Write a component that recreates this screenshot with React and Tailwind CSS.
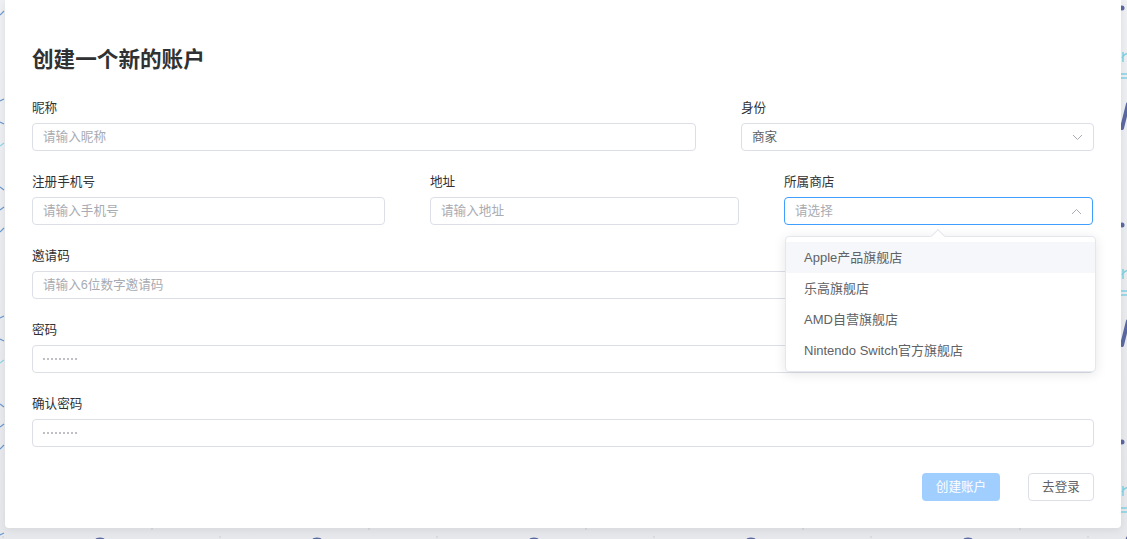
import { useState } from 'react'

const FONT = "font-['Liberation_Sans','Noto_Sans_CJK_SC',sans-serif]"

const STORES = ['Apple产品旗舰店', '乐高旗舰店', 'AMD自营旗舰店', 'Nintendo Switch官方旗舰店']

function Chevron({ up }) {
  return (
    <svg width="11" height="7" viewBox="0 0 11 7" className="text-[#a8abb2]">
      <polyline
        points={up ? '1,6 5.5,1.5 10,6' : '1,1 5.5,5.5 10,1'}
        fill="none"
        stroke="currentColor"
        strokeWidth="1"
      />
    </svg>
  )
}

function Field({ label, children, className = '' }) {
  return (
    <div className={`flex flex-col ${className}`}>
      <label className="mb-[4px] h-[22px] text-[12.6px] leading-[22px] text-[#303133]">{label}</label>
      {children}
    </div>
  )
}

function Box({ children, focused = false }) {
  return (
    <div
      className={`flex h-[28px] items-center rounded-[4px] border px-[10px] text-[12.6px] ${
        focused ? 'border-[#409eff]' : 'border-[#dcdfe6]'
      }`}
    >
      {children}
    </div>
  )
}

function Placeholder({ children }) {
  return <span className="text-[#a8abb2]">{children}</span>
}

function Dots() {
  return (
    <span className="flex gap-[2px]">
      {Array.from({ length: 9 }).map((_, i) => (
        <span key={i} className="h-[2px] w-[2px] rounded-full bg-[#a8abb2]" />
      ))}
    </span>
  )
}

// decorative tiled backdrop; only thin slivers show around the card
function Background() {
  return (
    <svg className="absolute inset-0 h-full w-full" aria-hidden="true">
      <defs>
        <pattern id="right" x="1120" y="0" width="20" height="217" patternUnits="userSpaceOnUse">
          <circle cx="2" cy="8" r="2.5" fill="#5b69a3" />
          <path d="M2 58 q3 -5 6 -4 M3 52 v10" fill="none" stroke="#7fd3e6" strokeWidth="1.5" />
          <path d="M1 74 h8 M1 78 h8" fill="none" stroke="#7fd3e6" strokeWidth="1.5" />
          <path d="M2 128 l6 -24" fill="none" stroke="#5b69a3" strokeWidth="4" strokeLinecap="round" />
        </pattern>
        <pattern id="left" x="0" y="0" width="10" height="217" patternUnits="userSpaceOnUse">
          <path d="M0 15 l4 -4 M0 101 l4 -2 M0 122 l4 2 M0 187 l4 3 M0 210 l4 -3" fill="none" stroke="#6a9ad0" strokeWidth="1.2" />
          <path d="M0 146 l4 -3" fill="none" stroke="#8fd6ea" strokeWidth="1.2" />
        </pattern>
        <pattern id="bottom" x="0" y="527" width="217" height="20" patternUnits="userSpaceOnUse">
          <circle cx="100" cy="19" r="7" fill="none" stroke="#5b69a3" strokeWidth="3" />
          <circle cx="152" cy="2" r="0.8" fill="#c3c7d2" />
          <circle cx="3" cy="10" r="0.8" fill="#c3c7d2" />
          <circle cx="219" cy="10" r="0.8" fill="#c3c7d2" />
        </pattern>
        <linearGradient id="fade" x1="0" y1="0" x2="0" y2="1">
          <stop offset="0" stopColor="#eef0f3" />
          <stop offset="1" stopColor="#e6e8ec" />
        </linearGradient>
      </defs>
      <rect width="100%" height="100%" fill="url(#fade)" />
      <rect x="1120" y="0" width="7" height="539" fill="url(#right)" />
      <rect x="0" y="0" width="5" height="539" fill="url(#left)" />
      <rect x="0" y="527" width="1127" height="12" fill="url(#bottom)" />
    </svg>
  )
}

export default function App() {
  const [hover] = useState(0)

  return (
    <div className={`relative h-[539px] w-full overflow-hidden ${FONT}`}>
      <Background />
      <div className="relative ml-[5px] w-[1116px] rounded-b-[4px] bg-white px-[27px] pt-[45px] pb-[27px] shadow-[0_2px_8px_rgba(0,0,0,0.08)]">
        <h1 className="h-[30px] text-[21.6px] leading-[30px] font-bold text-[#303133]">创建一个新的账户</h1>

        <div className="mt-[22px] flex gap-[45px]">
          <Field label="昵称" className="flex-1">
            <Box>
              <Placeholder>请输入昵称</Placeholder>
            </Box>
          </Field>
          <Field label="身份" className="w-[353px]">
            <Box>
              <span className="flex-1 text-[#606266]">商家</span>
              <Chevron />
            </Box>
          </Field>
        </div>

        <div className="mt-[20px] flex gap-[45px]">
          <Field label="注册手机号" className="w-[353px]">
            <Box>
              <Placeholder>请输入手机号</Placeholder>
            </Box>
          </Field>
          <Field label="地址" className="w-[309px]">
            <Box>
              <Placeholder>请输入地址</Placeholder>
            </Box>
          </Field>
          <Field label="所属商店" className="w-[309px]">
            <div className="relative">
              <Box focused>
                <span className="flex-1">
                  <Placeholder>请选择</Placeholder>
                </span>
                <Chevron up />
              </Box>
              {/* open dropdown */}
              <div className="absolute top-[39px] left-[1px] z-10 w-[311px] rounded-[4px] border border-[#e4e7ed] bg-white pt-[5px] pb-[5px] shadow-[0_2px_12px_rgba(0,0,0,0.1)]">
                <div className="absolute -top-[6px] left-[147px] h-[10px] w-[10px] rotate-45 border-t border-l border-[#e4e7ed] bg-white" />
                {STORES.map((s, i) => (
                  <div
                    key={s}
                    className={`relative flex h-[31px] items-center px-[18px] text-[13px] text-[#606266] ${
                      i === hover ? 'bg-[#f5f7fa]' : ''
                    }`}
                  >
                    {s}
                  </div>
                ))}
              </div>
            </div>
          </Field>
        </div>

        <Field label="邀请码" className="mt-[20px]">
          <Box>
            <Placeholder>请输入6位数字邀请码</Placeholder>
          </Box>
        </Field>

        <Field label="密码" className="mt-[20px]">
          <Box>
            <Dots />
          </Box>
        </Field>

        <Field label="确认密码" className="mt-[20px]">
          <Box>
            <Dots />
          </Box>
        </Field>

        <div className="mt-[26px] flex justify-end gap-[28px]">
          <button className="h-[28px] w-[78px] rounded-[4px] bg-[#a0cfff] text-[12.6px] text-white">创建账户</button>
          <button className="h-[28px] w-[66px] rounded-[4px] border border-[#dcdfe6] bg-white text-[12.6px] text-[#606266]">去登录</button>
        </div>
      </div>
    </div>
  )
}
